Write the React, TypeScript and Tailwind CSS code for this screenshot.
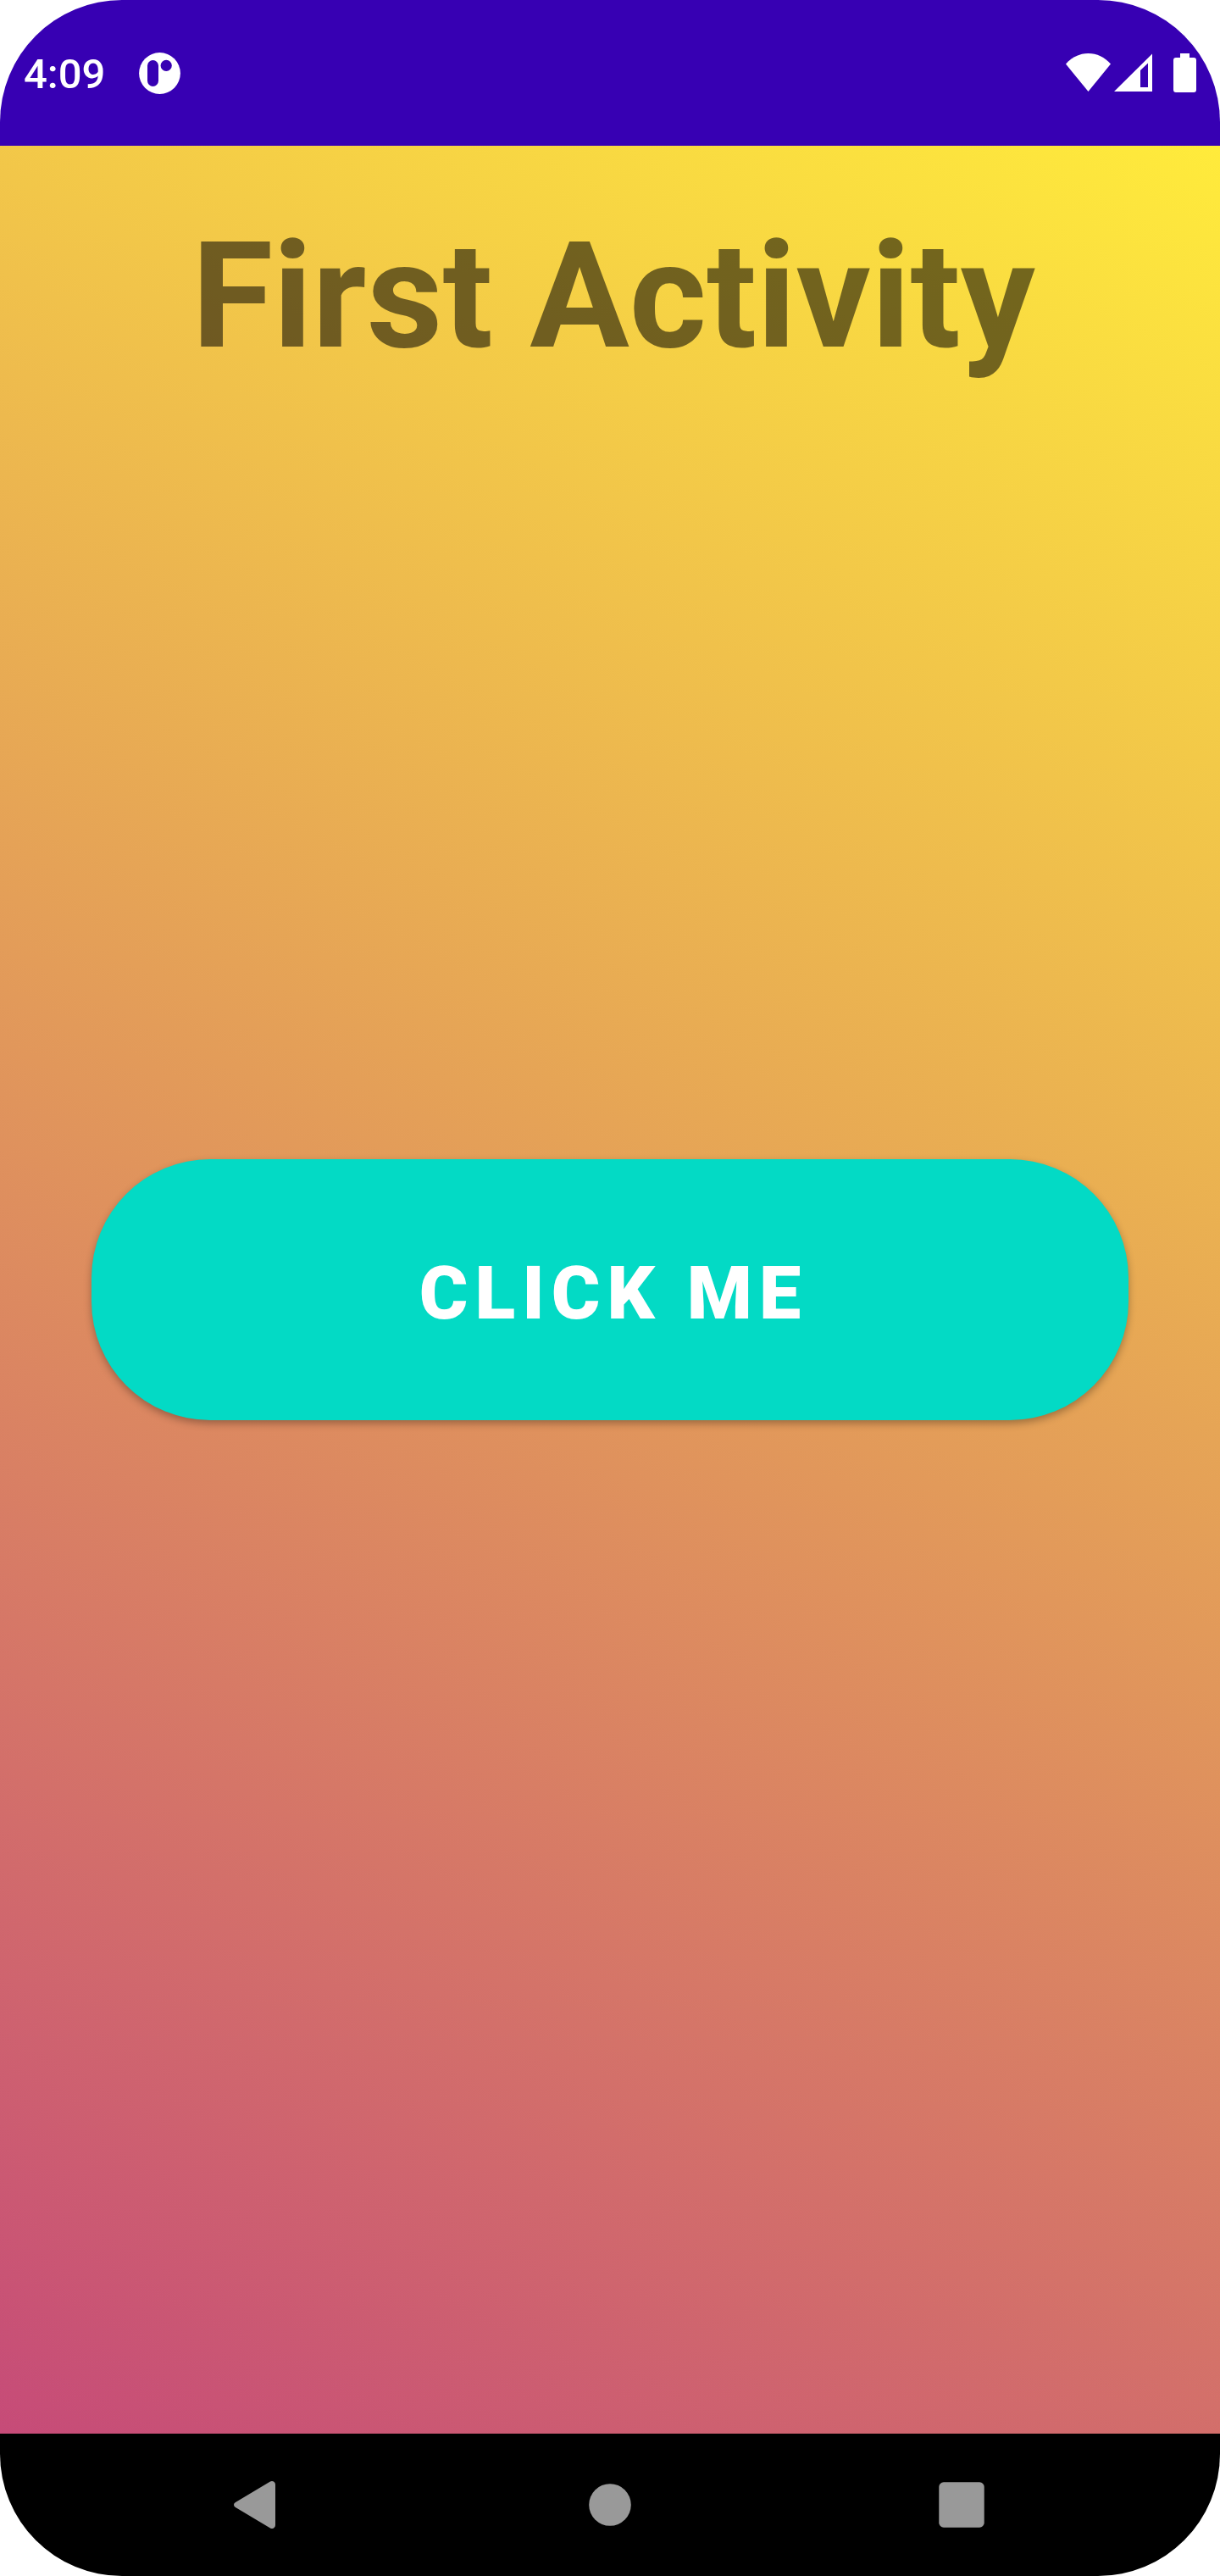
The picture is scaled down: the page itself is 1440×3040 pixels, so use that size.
function NotificationIcon() {
  return (
    <svg aria-hidden="true" width="49" height="49" viewBox="0 0 49 49">
      <circle cx="24.5" cy="24.5" r="24.4" fill="#fff" />
      <rect x="10" y="9" width="13" height="31" rx="6.5" fill="#3700b3" />
      <circle cx="32.2" cy="15.4" r="6.6" fill="#3700b3" />
    </svg>
  );
}

function WifiIcon() {
  return (
    <svg aria-hidden="true" width="53" height="46" viewBox="0 0 53 46" fill="#fff">
      <path d="M0 12.5C7 4.500 16.500 0 26.500 0S46 4.500 53 12.500L26.500 45Z" />
    </svg>
  );
}

function SignalIcon() {
  return (
    <svg aria-hidden="true" width="45" height="46" viewBox="0 0 45 46" fill="#fff" fillRule="evenodd">
      <path d="M0 45L45 .5V45ZM31 20V40H40V11.500Z" />
    </svg>
  );
}

function BatteryIcon() {
  return (
    <svg aria-hidden="true" width="27" height="46" viewBox="0 0 27 46" fill="#fff">
      <path d="M8 0H19V5H24Q27 5 27 8V43Q27 46 24 46H3Q0 46 0 43V8Q0 5 3 5H8Z" />
    </svg>
  );
}

function StatusBar() {
  return (
    <header className="flex h-[172px] items-center justify-between bg-[#3700b3] px-7 text-white">
      <div className="flex items-center gap-10">
        <time className="pt-0.5 text-[49px] leading-none font-medium">4:09</time>
        <NotificationIcon />
      </div>
      <div className="flex items-center">
        <WifiIcon />
        <div className="ml-1 flex gap-[25px]">
          <SignalIcon />
          <BatteryIcon />
        </div>
      </div>
    </header>
  );
}

function NavigationBar() {
  return (
    <nav className="flex h-[168px] items-center justify-between bg-black px-64 text-[#999]">
      <button type="button" aria-label="Back">
        <svg width="98" height="98" viewBox="0 0 98 98" fill="currentColor">
          <path d="M22 46L63 21.500Q65 20.500 67 21.500Q69 22.500 69 25V73Q69 75.500 67 76.500Q65 77.500 63 76.500L22 52Q20 51 20 49T22 46Z" />
        </svg>
      </button>
      <button type="button" aria-label="Home">
        <svg width="98" height="98" viewBox="0 0 98 98" fill="currentColor">
          <circle cx="49" cy="49" r="24.800" />
        </svg>
      </button>
      <button type="button" aria-label="Recent apps">
        <svg width="98" height="98" viewBox="0 0 98 98" fill="currentColor">
          <rect x="22.300" y="22.300" width="53.400" height="53.400" rx="5.500" />
        </svg>
      </button>
    </nav>
  );
}

export default function App() {
  return (
    <div className="min-h-screen bg-white font-['Roboto',sans-serif]">
      <div className="flex min-h-screen flex-col overflow-hidden rounded-[144px]">
        <StatusBar />
        <main className="grid flex-1 grid-rows-[1fr_auto_1fr] justify-items-center bg-[linear-gradient(28deg,#c64b78,#ffeb3b)]">
          <h1 className="pt-[74px] pl-2 text-[175px] leading-[208px] font-bold text-black/54">First Activity</h1>
          <button
            type="button"
            className="h-[308px] w-[85%] rounded-[140px] bg-[#03dac5] pt-2 pl-2 text-[88px] font-black tracking-[8px] text-white uppercase shadow-[0_4px_10px_rgba(0,0,0,0.3)]"
          >
            Click me
          </button>
        </main>
        <NavigationBar />
      </div>
    </div>
  );
}
